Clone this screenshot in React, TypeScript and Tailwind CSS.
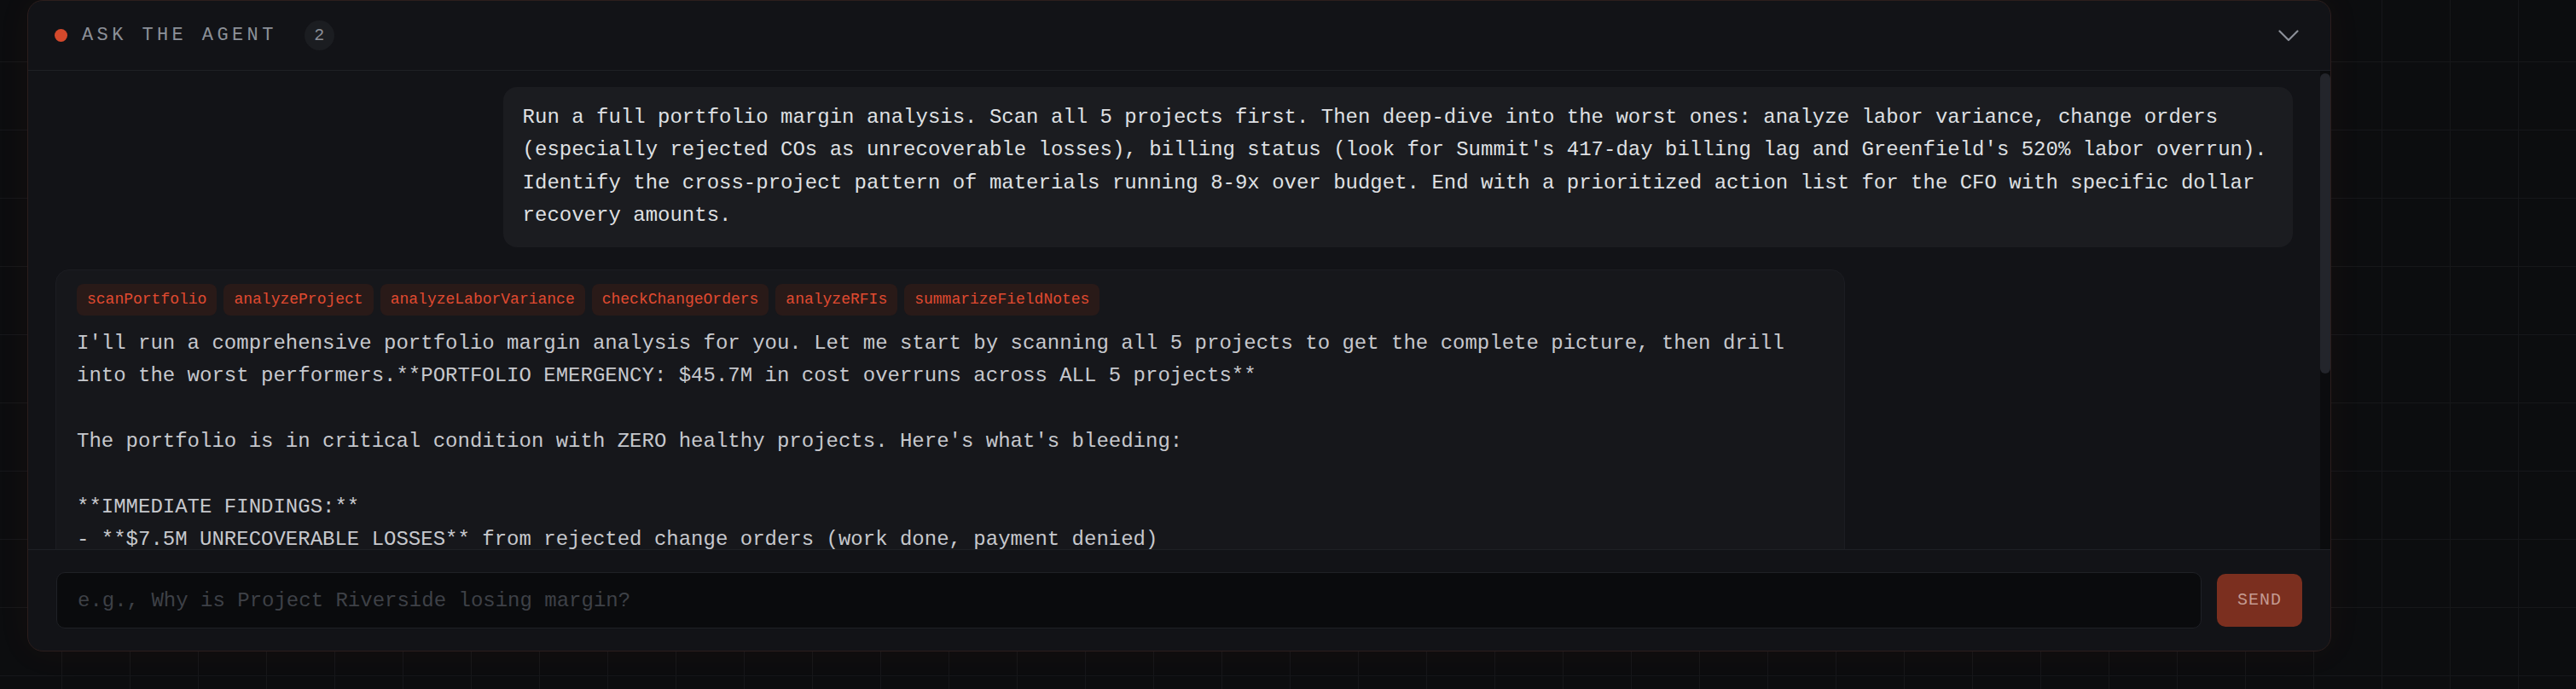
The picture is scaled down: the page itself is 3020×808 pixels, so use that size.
import React from 'react';

const TOOLS = [
  'scanPortfolio',
  'analyzeProject',
  'analyzeLaborVariance',
  'checkChangeOrders',
  'analyzeRFIs',
  'summarizeFieldNotes',
];

const USER_MSG =
  "Run a full portfolio margin analysis. Scan all 5 projects first. Then deep-dive into the worst ones: analyze labor variance, change orders (especially rejected COs as unrecoverable losses), billing status (look for Summit's 417-day billing lag and Greenfield's 520% labor overrun). Identify the cross-project pattern of materials running 8-9x over budget. End with a prioritized action list for the CFO with specific dollar recovery amounts.";

const AGENT_MSG = `I'll run a comprehensive portfolio margin analysis for you. Let me start by scanning all 5 projects to get the complete picture, then drill into the worst performers.**PORTFOLIO EMERGENCY: $45.7M in cost overruns across ALL 5 projects**

The portfolio is in critical condition with ZERO healthy projects. Here's what's bleeding:

**IMMEDIATE FINDINGS:**
- **$7.5M UNRECOVERABLE LOSSES** from rejected change orders (work done, payment denied)
- **$18.2M labor overruns** led by Greenfield (520% over budget) and Summit
- **Materials running 8-9x over budget** on every single project
- **417-day billing lag** on Summit trapping $4.1M in unbilled work

Let me drill into the worst performers now.

**GREENFIELD DEEP-DIVE:**
- Labor: 520% over plan, driven by overtime and rework`;

const mono = "font-['Liberation_Mono','DejaVu_Sans_Mono',monospace]";

export default function App() {
  return (
    <div
      className={`min-h-screen w-full bg-[#0c0d0f] bg-[linear-gradient(to_right,#16171a_1px,transparent_1px),linear-gradient(to_bottom,#16171a_1px,transparent_1px)] bg-size-[80px_80px] bg-position-[72px_72px] pl-[32px] ${mono}`}
    >
      <div className="flex h-[764px] w-[2701px] flex-col overflow-hidden rounded-[18px] border border-[#2c1e1d] bg-[#121317] shadow-[0_0_40px_rgba(190,60,30,0.06)]">
        {/* header */}
        <div className="flex h-[82px] shrink-0 items-center border-b border-[#1e2025] pl-[31px] pr-[37px]">
          <span className="h-[15px] w-[15px] rounded-full bg-[#d4492c]" />
          <span className="ml-[17px] text-[22px] font-medium uppercase tracking-[4.4px] text-[#8c9098]">
            Ask the agent
          </span>
          <span className="ml-[32px] flex h-[35px] w-[35px] items-center justify-center rounded-full bg-[#1b1d21] text-[20px] text-[#8a8e96]">
            2
          </span>
          <div className="flex-1" />
          <svg width="24" height="14" viewBox="0 0 24 14" fill="none">
            <polyline points="1.5,1.5 12,12 22.5,1.5" stroke="#8b8f98" strokeWidth="2.2" strokeLinecap="round" strokeLinejoin="round" />
          </svg>
        </div>

        {/* messages + scrollbar */}
        <div className="flex h-[561px] shrink-0">
          <div className="flex flex-1 flex-col gap-[26px] overflow-hidden px-[32px] pb-[20px] pt-[19px]">
            <div className="max-w-[80%] self-end rounded-[16px] bg-[#1b1c20] px-[23px] py-[17px] text-[24px] leading-[38.4px] text-[#dfe0e3]">
              {USER_MSG}
            </div>

            <div className="max-w-[80%] self-start rounded-[16px] border border-[#1c1d22] bg-[#16171b] px-[24px] py-[16px]">
              <div className="flex flex-wrap gap-[8px]">
                {TOOLS.map((t) => (
                  <span
                    key={t}
                    className="flex h-[37px] items-center rounded-[8px] bg-[#291a18] px-[12px] text-[18px] text-[#e04a30]"
                  >
                    {t}
                  </span>
                ))}
              </div>
              <div className="mt-[14px] whitespace-pre-wrap text-[24px] leading-[38.4px] text-[#c6c8cd]">
                {AGENT_MSG}
              </div>
            </div>
          </div>
          <div className="w-[12px] shrink-0 bg-[#0b0c0e] pt-[3px]">
            <div className="h-[352px] w-full rounded-full bg-[#23252b]" />
          </div>
        </div>

        {/* input */}
        <div className="flex shrink-0 items-center border-t border-[#1e2025] px-[33px] py-[26px]">
          <input
            className="h-[66px] flex-1 rounded-[10px] border border-[#1f2126] bg-[#0a0b0d] px-[24px] text-[24px] text-[#e4e4e7] outline-none placeholder:text-[#3e4147]"
            placeholder="e.g., Why is Project Riverside losing margin?"
          />
          <button className="ml-[18px] h-[62px] w-[100px] rounded-[10px] bg-[#7b2f1f] text-[20px] uppercase tracking-[1px] text-[#c49b91]">
            Send
          </button>
        </div>
      </div>
    </div>
  );
}
